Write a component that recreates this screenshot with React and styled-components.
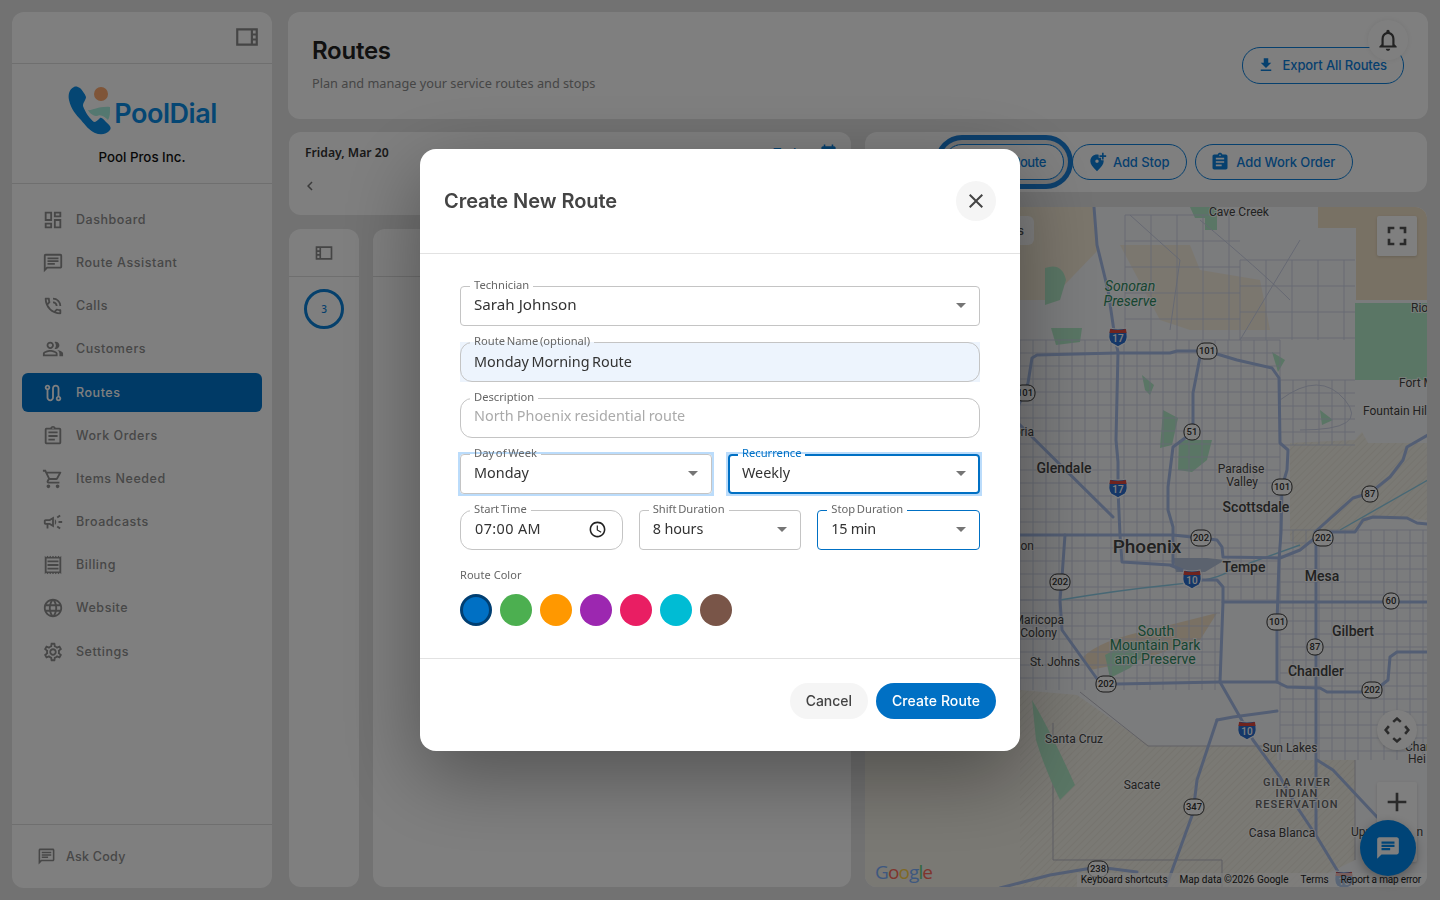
import React from 'react';
import styled, { createGlobalStyle } from 'styled-components';
import {
  MdOutlineDashboard, MdOutlineChat, MdOutlinePhoneInTalk, MdOutlinePeopleAlt, MdOutlineRoute,
  MdOutlineAssignment, MdOutlineShoppingCart, MdOutlineCampaign, MdOutlineReceipt, MdOutlineLanguage,
  MdOutlineSettings, MdOutlineViewSidebar, MdFileDownload, MdNotificationsNone, MdAddLocationAlt,
  MdAssignment, MdClose, MdArrowDropDown, MdAccessTime, MdChevronLeft, MdChat, MdCalendarMonth, MdFullscreen, MdAdd, MdRemove,
} from 'react-icons/md';

const UI = '"Inter", "Liberation Sans", sans-serif';
const BODY = '"Noto Sans", "Open Sans", sans-serif';
const BLUE = '#0070c4';
const LINE_BLUE = '#0d80dc';
const LOGO_BLUE = '#0a8ce6';

const Global = createGlobalStyle`
  html, body { margin: 0; padding: 0; height: 100%; background: #e4e4e4; overflow: hidden; }
  * { box-sizing: border-box; }
  #root { height: 100%; }
`;

const Page = styled.div`
  width: 1440px; height: 900px; padding: 12px; display: flex; gap: 16px; font-family: ${UI};
`;
const Sidebar = styled.aside`
  width: 260px; height: 876px; background: #fff; border-radius: 12px; display: flex; flex-direction: column;
`;
const SideTop = styled.div`
  height: 52px; border-bottom: 1px solid #dedede; display: flex; align-items: center; justify-content: flex-end;
  padding-right: 12px; color: #8a8a8a; font-size: 26px; padding-bottom: 2px;
`;
const Brand = styled.div`
  height: 120px; border-bottom: 1px solid #dedede; display: flex; flex-direction: column; align-items: center; padding-top: 21px;
`;
const LogoRow = styled.div`display: flex; align-items: flex-end; height: 50px;`;
const LogoWord = styled.span`
  font: 600 27px/27px ${UI}; color: ${LOGO_BLUE}; letter-spacing: -0.45px; margin-left: -1px; margin-bottom: 8px;
`;
const Company = styled.div`font: 500 13.3px/18px ${UI}; color: #111; margin-top: 13px;`;
const Nav = styled.nav`
  flex: 1; padding: 16.3px 10px 0; display: flex; flex-direction: column; gap: 4.2px;
`;
const NavItem = styled.div`
  height: 39px; border-radius: 6px; display: flex; align-items: center; gap: 12px; padding-left: 20px;
  background: ${p => (p.$active ? '#0074cc' : 'transparent')};
  color: ${p => (p.$active ? '#fff' : '#8e8e8e')};
  font: 500 12.5px/16px ${UI}; letter-spacing: 0.55px;
  svg { font-size: 22px; flex: none; }
`;
const SideFoot = styled.div`
  height: 64px; border-top: 1px solid #dedede; display: flex; align-items: center; gap: 10px; padding-left: 25px;
  color: #8e8e8e; font: 500 12.5px/16px ${UI}; letter-spacing: 0.25px; svg { font-size: 19px; }
`;

const Main = styled.main`flex: 1; display: flex; flex-direction: column; gap: 13px; min-width: 0; padding-bottom: 1px;`;
const Header = styled.header`
  position: relative; height: 107px; background: #fff; border-radius: 12px; padding: 24px; display: flex; justify-content: space-between;
`;
const PageTitle = styled.h1`margin: 0; font: 600 24px/30px ${UI}; color: #222; letter-spacing: -0.25px;`;
const PageSub = styled.p`margin: 8px 0 0; font: 400 12.72px/18px ${BODY}; color: #8c8c8c;`;
const Outline = styled.button`
  height: 36px; padding: 0 17px 0 14px; border-radius: 18px; border: 1px solid ${LINE_BLUE}; background: transparent; color: ${LINE_BLUE};
  font: 500 13px/16px ${UI}; letter-spacing: ${p => (p.$focus ? -0.4 : -0.1)}px; display: inline-flex; align-items: center; gap: 6px; flex: none; white-space: nowrap;
  svg { font-size: 20px; }
  ${p => p.$focus && `box-shadow: 0 0 0 4px #e6e6e6, 0 0 0 9px #1a7fd8;`}
`;
const ExportBtn = styled(Outline)`
  height: 37px; margin-top: 11px; padding: 0 16px 2px 14px; gap: 8px; svg { font-size: 18px; }
`;
const Bell = styled.div`
  position: absolute; left: 1080px; top: 8px; width: 40px; height: 40px; border-radius: 50%; background: #fff; color: #444;
  display: flex; align-items: center; justify-content: center; font-size: 26px; box-shadow: 0 0 6px rgba(0,0,0,.08);
`;
const Columns = styled.div`flex: 1; display: flex; gap: 14px; padding: 0 1px; min-height: 0;`;
const LeftCol = styled.div`width: 562px; display: flex; flex-direction: column; gap: 14px;`;
const RightCol = styled.div`flex: 1; display: flex; flex-direction: column; gap: 15px; min-width: 0;`;
const DateCard = styled.div`
  height: 83px; background: #fff; border-radius: 12px; padding: 11px 16px; color: #333;
`;
const DateRow = styled.div`display: flex; justify-content: space-between; align-items: center;`;
const DateText = styled.div`font: 600 12.2px/18px ${BODY}; color: #333;`;
const TodayLink = styled.div`
  color: ${LINE_BLUE}; font: 500 13px/18px ${UI}; display: flex; align-items: center; gap: 8px; margin-right: -3px;
  svg { font-size: 19px; }
`;
const Chevron = styled.div`font-size: 18px; color: #777; margin: 15px 0 0 -4px; display: flex;`;
const Panels = styled.div`flex: 1; display: flex; gap: 14px; min-height: 0;`;
const Panel = styled.section`
  width: ${p => (p.$w ? `${p.$w}px` : 'auto')}; flex: ${p => (p.$w ? 'none' : 1)}; background: #fff; border-radius: 12px;
  display: flex; flex-direction: column; align-items: center;
`;
const PanelHead = styled.div`
  height: 48px; width: 100%; border-bottom: 1px solid #dedede; display: flex; align-items: center; justify-content: center;
  color: #8a8a8a; font-size: 20px; svg { transform: scaleX(-1); }
`;
const Stop = styled.div`
  width: 40px; height: 40px; margin-top: 12px; border-radius: 50%; border: 3px solid #0a80d8; color: #0a80d8;
  display: flex; align-items: center; justify-content: center; font: 500 10px/12px ${BODY};
`;
const Toolbar = styled.div`
  height: 60px; background: #fff; border-radius: 12px; display: flex; align-items: center; gap: 8px; padding-left: 79px;
`;
const MapCard = styled.div`
  position: relative; flex: 1; background: #f7f8fa; border-radius: 12px; overflow: hidden;
`;
const MapSvg = styled.svg`display: block; width: 100%; height: 100%;`;
const MapBtn = styled.div`
  position: absolute; width: 40px; height: ${p => p.$h || 40}px; left: 512px; top: ${p => p.$top}px; background: #fff;
  border-radius: ${p => (p.$round ? '50%' : '2px')}; display: flex; flex-direction: column; align-items: center; justify-content: center; gap: 8px;
  color: #555; font-size: 32px; box-shadow: 0 1px 3px rgba(0,0,0,.15);
`;
const MapChip = styled.div`
  position: absolute; left: 60px; top: 9px; width: 109px; height: 29px; background: #fff; border-radius: 6px;
  font: 500 12px/29px ${UI}; color: #555; text-align: right; padding-right: 10px;
`;
const Attribution = styled.div`
  position: absolute; right: 0; bottom: 0; height: 14px; padding: 0 6px 0 4px; display: flex; gap: 12px; background: rgba(255,255,255,.65);
  font: 400 10px/13px "Roboto", sans-serif; color: #222; white-space: nowrap;
`;
const ReportLink = styled.span`letter-spacing: -0.17px;`;
const Fab = styled.div`
  position: absolute; left: 1360px; top: 820px; width: 56px; height: 56px; border-radius: 50%; background: #0088ee; color: #fff;
  display: flex; align-items: center; justify-content: center; font-size: 26px; box-shadow: 0 4px 12px rgba(0,0,0,.3);
`;

const Overlay = styled.div`
  position: fixed; inset: 0; background: rgba(0,0,0,.5); display: flex; align-items: center; justify-content: center;
`;
const Dialog = styled.div`
  width: 600px; background: #fff; border-radius: 16px; box-shadow: 0 24px 80px rgba(0,0,0,.36);
`;
const DialogHead = styled.div`
  padding: 32px 24px; border-bottom: 1px solid #e2e2e2; display: flex; align-items: center; justify-content: space-between;
`;
const DialogTitle = styled.h2`margin: 0; font: 600 20px/40px ${UI}; color: #444; letter-spacing: -0.05px;`;
const CloseBtn = styled.button`
  width: 40px; height: 40px; border-radius: 50%; border: 0; background: #f5f5f5; color: #444; font-size: 24px;
  display: flex; align-items: center; justify-content: center; padding: 0;
`;
const DialogBody = styled.div`padding: 26px 40px 32px; display: flex; flex-direction: column; gap: 10px;`;
const Row = styled.div`display: grid; grid-template-columns: repeat(${p => p.$n}, 1fr); gap: 16px;`;
const FieldWrap = styled.div`
  min-width: 0;
  ${p => p.$fill && `background: linear-gradient(#edf4fd, #edf4fd) no-repeat 0 6px / 100% 40px;`}
  ${p => p.$ring && `
    margin: 0 -2px -2px; padding: 0 2px 2px;
    background: linear-gradient(#bbdcfb, #bbdcfb) no-repeat 0 4px / 100% 44px;
  `}
`;
const Field = styled.fieldset`
  margin: 0; min-width: 0; height: 46px; padding: 0 13px ${p => (p.$input ? 6 : 8)}px;
  display: flex; align-items: center; justify-content: space-between;
  border: ${p => (p.$thick ? 2 : 1)}px solid ${p => (p.$blue ? BLUE : '#c4c4c4')};
  border-radius: ${p => (p.$round ? 12 : 4)}px;
  ${p => p.$thick && 'padding-left: 12px; padding-right: 12px;'}
  ${p => p.$white && 'background: #fff;'}
`;
const Legend = styled.legend`
  font: 400 11.2px/10px ${BODY}; height: 13px; padding: 0 4px; margin-left: -4px; white-space: nowrap; word-spacing: -1.2px;
  color: ${p => (p.$blue ? BLUE : '#666')};
`;
const Value = styled.span`
  font: 400 ${p => p.$size || 14.4}px/22px ${BODY}; color: ${p => p.$color || '#333'}; white-space: nowrap;
  letter-spacing: ${p => p.$ls || 0}px; word-spacing: ${p => p.$ws || 0}px;
  margin-left: ${p => p.$ml || 0}px; margin-top: ${p => p.$mt || 0}px;
`;
const Caret = styled.span`display: flex; font-size: 24px; color: #757575; margin-right: -7px;`;
const ClockIcon = styled.span`display: flex; font-size: 19px; color: #222; margin-right: 2px;`;
const ColorLabel = styled.div`font: 400 11px/14px ${BODY}; color: #666; margin-top: 8px; letter-spacing: 0.05px;`;
const Swatches = styled.div`display: flex; gap: 8px; margin-top: 2px;`;
const Swatch = styled.div`
  width: 32px; height: 32px; border-radius: 50%; background: ${p => p.$c}; border: ${p => (p.$sel ? '3px solid #003f72' : '0')};
`;
const DialogFoot = styled.div`
  border-top: 1px solid #e2e2e2; padding: 24px; display: flex; justify-content: flex-end; gap: 8px; padding-bottom: 32px;
`;
const Pill = styled.button`
  height: 36px; border: 0; border-radius: 18px; padding: 0 16px; font: 500 14px/18px ${UI};
  letter-spacing: ${p => (p.$primary ? 0.1 : -0.05)}px;
  background: ${p => (p.$primary ? BLUE : '#f5f5f5')}; color: ${p => (p.$primary ? '#fff' : '#444')};
`;

const MapText = styled.text`
  font-family: "Roboto", sans-serif; font-size: ${p => p.$s || 12}px; font-weight: ${p => p.$w || 400};
  fill: ${p => p.$c || '#444'}; text-anchor: ${p => p.$a || 'middle'}; font-style: ${p => (p.$i ? 'italic' : 'normal')};
  letter-spacing: ${p => p.$ls || 0}px; paint-order: stroke; stroke: rgba(255,255,255,.8); stroke-width: 2px;
`;
const ShieldText = styled.text`
  font-family: "Roboto", sans-serif; font-size: ${p => p.$s || 9.5}px; font-weight: 500; fill: ${p => p.$c || '#333'}; text-anchor: middle;
`;
const GoogleMark = styled.text`font-family: "Open Sans", sans-serif; font-size: 19px; font-weight: 500; letter-spacing: -0.9px;`;

const NAV = [
  ['Dashboard', MdOutlineDashboard], ['Route Assistant', MdOutlineChat], ['Calls', MdOutlinePhoneInTalk],
  ['Customers', MdOutlinePeopleAlt], ['Routes', MdOutlineRoute, true], ['Work Orders', MdOutlineAssignment],
  ['Items Needed', MdOutlineShoppingCart], ['Broadcasts', MdOutlineCampaign], ['Billing', MdOutlineReceipt],
  ['Website', MdOutlineLanguage], ['Settings', MdOutlineSettings],
];
const COLORS = ['#0070c4', '#4caf50', '#ff9800', '#9c27b0', '#e91e63', '#00bcd4', '#795548'];

const gridPath = (x0, x1, y0, y1, step) => {
  let d = '';
  for (let x = x0; x <= x1; x += step) d += `M${x} ${y0}V${y1}`;
  for (let y = y0; y <= y1; y += step) d += `M${x0} ${y}H${x1}`;
  return d;
};
const GRIDS = [
  gridPath(1020, 1280, 340, 600, 13),
  gridPath(1280, 1355, 380, 445, 13),
  gridPath(1280, 1427, 530, 760, 13),
  gridPath(1020, 1220, 600, 690, 13),
  gridPath(1125, 1240, 215, 340, 26),
  gridPath(1240, 1355, 260, 340, 26),
];
const HIGHWAYS = [
  'M1094 207L1097 245L1108 290L1115 338L1118 352L1116 440L1118 462L1118 490L1120 535',
  'M1016 412L1028 383L1032 358L1037 355L1117 353L1170 353L1177 351L1207 351L1237 360L1272 368L1279 378L1280 443L1288 450L1287 470L1282 487L1281 533L1279 560L1277 623L1277 682',
  'M1200 357L1193 393L1193 432L1173 447L1168 487L1168 510L1173 527L1173 565',
  'M1000 535L1117 535L1173 535L1201 538L1217 540L1222 547L1223 557L1280 558L1300 550L1315 538L1323 532L1355 532L1363 520L1373 517L1407 518L1417 523L1428 524',
  'M1120 535L1122 562L1170 565L1187 572L1192 580L1217 580L1223 587L1223 602L1220 682L1240 717L1253 740L1280 777L1297 807L1317 837L1337 870L1346 887',
  'M1315 532L1353 498L1370 493L1390 477L1403 460L1407 447L1428 435',
  'M1223 602H1428',
  'M1065 535L1062 577L1060 600L1062 630L1100 683L1117 684L1220 682L1277 682L1287 687L1320 688L1327 692L1373 692L1388 680L1390 657L1397 652L1428 652',
  'M1015 420L1113 517',
  'M1316 540V835',
  'M1317 760L1333 770L1377 817',
  'M1217 720L1197 780L1193 813L1166 887',
  'M1217 720L1233 717L1277 711',
  'M1000 888L1050 875L1098 867L1137 872',
];
const PARKS = [
  'M1355 303H1427V380H1355Z',
  'M1179 440L1212 440L1207 460L1192 472L1178 470Z',
  'M1163 410L1178 418L1172 445L1160 448Z',
  'M1051 328L1082 328L1080 342L1056 345Z',
  'M1190 207H1217V230H1205V218H1195Z',
  'M1045 268Q1062 262 1066 280L1060 300L1045 305Z',
  'M1105 655L1130 642L1160 640L1130 668L1110 678Z',
  'M1032 700Q1050 730 1075 785L1060 800Q1045 770 1036 740Z',
  'M1272 352L1285 360L1278 372Z',
  'M1320 410L1333 420L1322 425Z',
  'M1142 375L1154 385L1150 395L1145 390Z',
];
const LABELS = [
  ['Cave Creek', 1239, 216, { s: 12 }], ['Sonoran', 1130, 291, { s: 14, i: 1, c: '#2e8b62' }], ['Preserve', 1130, 306, { s: 14, i: 1, c: '#2e8b62' }],
  ['Rio', 1411, 312, { a: 'start' }], ['Fort M', 1399, 387, { a: 'start' }], ['Fountain Hil', 1363, 415, { a: 'start' }],
  ['Glendale', 1064, 473, { s: 14, w: 500 }], ['Paradise', 1241, 473], ['Valley', 1242, 486], ['Scottsdale', 1256, 512, { s: 14, w: 500 }],
  ['Phoenix', 1147, 553, { s: 19, w: 500 }], ['Tempe', 1244, 572, { s: 14, w: 500 }], ['Mesa', 1322, 581, { s: 14, w: 500 }],
  ['Gilbert', 1353, 636, { s: 14, w: 500 }], ['Chandler', 1316, 676, { s: 14, w: 500 }],
  ['South', 1156, 636, { s: 14, c: '#2e8b62' }], ['Mountain Park', 1155, 650, { s: 14, c: '#2e8b62' }], ['and Preserve', 1155, 664, { s: 14, c: '#2e8b62' }],
  ['Maricopa', 1064, 624, { a: 'end' }], ['Colony', 1057, 637, { a: 'end' }], ['St. Johns', 1055, 666], ['Santa Cruz', 1074, 743], ['Sacate', 1142, 789],
  ['Sun Lakes', 1290, 752], ['Casa Blanca', 1282, 837], ['Chan', 1405, 751, { a: 'start' }], ['Hei', 1408, 763, { a: 'start' }],
  ['Upper Santan', 1351, 836, { a: 'start' }], ['Peoria', 1034, 436, { a: 'end' }], ['Tolleson', 1034, 550, { a: 'end' }],
  ['GILA RIVER', 1297, 786, { s: 11, w: 500, ls: 1.1, c: '#666' }], ['INDIAN', 1297, 797, { s: 11, w: 500, ls: 1.1, c: '#666' }], ['RESERVATION', 1297, 808, { s: 11, w: 500, ls: 1.1, c: '#666' }],
];
const SHIELDS = [
  [1207, 351, '101'], [1025, 393, '101'], [1192, 432, '51'], [1282, 487, '101'], [1370, 494, '87'], [1201, 538, '202'], [1323, 538, '202'],
  [1060, 582, '202'], [1106, 684, '202'], [1372, 690, '202'], [1277, 622, '101'], [1315, 647, '87'], [1194, 807, '347'], [1098, 869, '238'], [1391, 601, '60'],
];
const INTERSTATES = [[1118, 337, '17'], [1118, 488, '17'], [1192, 579, '10'], [1247, 730, '10'], [1344, 880, '10']];

function Shield({ x, y, t }) {
  const w = t.length > 2 ? 20 : 16;
  return (
    <g>
      <rect x={x - w / 2} y={y - 8} width={w} height={16} rx={7} fill="#fff" stroke="#333" strokeWidth="1" />
      <ShieldText x={x} y={y + 3.3}>{t}</ShieldText>
    </g>
  );
}
function Interstate({ x, y, t }) {
  return (
    <g>
      <path d={`M${x - 8} ${y - 9}Q${x} ${y - 7} ${x + 8} ${y - 9}Q${x + 11} ${y + 2} ${x + 7} ${y + 6}Q${x + 3} ${y + 8} ${x} ${y + 10}Q${x - 3} ${y + 8} ${x - 7} ${y + 6}Q${x - 11} ${y + 2} ${x - 8} ${y - 9}Z`} fill="#2a6fd0" stroke="#fff" strokeWidth="1.2" />
      <path d={`M${x - 8} ${y - 8}Q${x} ${y - 6} ${x + 8} ${y - 8}L${x + 8.5} ${y - 4}H${x - 8.5}Z`} fill="#e0483c" />
      <ShieldText x={x} y={y + 5} $s={10} $c="#fff">{t}</ShieldText>
    </g>
  );
}

function PhoenixMap() {
  return (
    <MapSvg viewBox="865 207 562 680" preserveAspectRatio="none">
      <defs>
        <pattern id="hatch" width="5" height="5" patternUnits="userSpaceOnUse" patternTransform="rotate(45)">
          <rect width="5" height="5" fill="#f5f2e8" />
          <line x1="0" y1="0" x2="0" y2="5" stroke="#e4e0d4" strokeWidth="1" />
        </pattern>
      </defs>
      <rect x="865" y="207" width="563" height="680" fill="#f7f8fa" />
      <path d="M865 700H1054V887H865Z" fill="#f5f2e8" />
      <path d="M1020 207H1094L1098 250L1050 300H1020Z" fill="#f6ecd8" />
      <path d="M1120 245H1190L1200 270L1260 280L1270 330H1190L1160 320Z" fill="#f6ecd8" opacity=".8" />
      <path d="M1318 207H1428V300H1356V228H1318Z" fill="#f1e2c8" />
      <path d="M1083 657Q1100 640 1150 630L1217 613L1200 640L1140 660L1090 670Z" fill="#f4e2c8" />
      <path d="M1290 443L1355 440L1362 432L1368 443H1428V520L1373 517L1355 530L1320 532L1300 548L1290 540Z" fill="url(#hatch)" />
      <path d="M1020 690L1077 695L1150 746H1277V760H1355V860L1300 887H1020Z" fill="url(#hatch)" />
      <path d="M1053 723V860H1222V887" fill="none" stroke="#b9b9c4" strokeWidth="1" />
      <path d="M1080 692L1148 746H1277M1355 760V860" fill="none" stroke="#c2c2cc" strokeWidth="1" />
      {PARKS.map((d, i) => <path key={i} d={d} fill="#b4ecca" />)}
      {GRIDS.map((d, i) => <path key={i} d={d} fill="none" stroke="#ccd2e6" strokeWidth=".9" />)}
      <path d="M1280 400Q1320 370 1345 400T1300 430M1130 215L1180 260L1170 330M1300 240L1240 340M1200 220Q1260 270 1290 300" fill="none" stroke="#ccd2e6" strokeWidth="1" />
      <path d="M1060 600Q1120 590 1170 585T1230 570L1300 545M1340 530L1428 480" fill="none" stroke="#8fd0ea" strokeWidth="1.4" />
      <path d="M1173 558H1207L1225 560L1205 572H1176Z" fill="#b7c4dc" />
      {HIGHWAYS.map((d, i) => <path key={i} d={d} fill="none" stroke="#a6bce8" strokeWidth="3" strokeLinejoin="round" strokeLinecap="round" />)}
      {LABELS.map(([t, x, y, o = {}]) => (
        <MapText key={t} x={x} y={y} $s={o.s} $w={o.w} $c={o.c} $a={o.a} $i={o.i} $ls={o.ls}>{t}</MapText>
      ))}
      {SHIELDS.map(([x, y, t]) => <Shield key={`${x}${y}`} x={x} y={y} t={t} />)}
      {INTERSTATES.map(([x, y, t]) => <Interstate key={`${x}${y}`} x={x} y={y} t={t} />)}
      <GoogleMark x="875" y="879">
        <tspan fill="#7cb0ff">G</tspan><tspan fill="#ff6a5a">o</tspan><tspan fill="#ffd24a">o</tspan><tspan fill="#7cb0ff">g</tspan><tspan fill="#5fd080">l</tspan><tspan fill="#ff6a5a">e</tspan>
      </GoogleMark>
    </MapSvg>
  );
}

function Logo() {
  return (
    <svg width="48" height="50" viewBox="0 0 48 50">
      <path d="M7 2C2 4 1 10 2 15C4 24 9 30 14 35C18 40 23 46 28 48C33 50 39 50 43 45C45 42 42 40 39 37C37 35 35 32 33 33C31 35 29 37 27 37C23 34 18 27 16 21C16 17 19 15 19 12C18 9 15 5 13 3C11 2 9 1 7 2Z" fill={LOGO_BLUE} />
      <circle cx="34" cy="9" r="7" fill="#ffaa70" />
      <path d="M21 25C25 26 31 21 43 22C43 28 43 32 41 35C38 32 34 29 30 31C27 31 23 29 21 25Z" fill="#a8f0e0" />
    </svg>
  );
}

function Select({ label, value, wrap = {}, valueProps = {}, labelBlue, ...rest }) {
  return (
    <FieldWrap {...wrap}>
      <Field {...rest}>
        <Legend $blue={labelBlue}>{label}</Legend>
        <Value {...valueProps}>{value}</Value>
        <Caret><MdArrowDropDown /></Caret>
      </Field>
    </FieldWrap>
  );
}

export default function App() {
  return (
    <>
      <Global />
      <Page>
        <Sidebar>
          <SideTop><MdOutlineViewSidebar /></SideTop>
          <Brand>
            <LogoRow><Logo /><LogoWord>PoolDial</LogoWord></LogoRow>
            <Company>Pool Pros Inc.</Company>
          </Brand>
          <Nav>
            {NAV.map(([t, I, a]) => (
              <NavItem key={t} $active={a}><I />{t}</NavItem>
            ))}
          </Nav>
          <SideFoot><MdOutlineChat />Ask Cody</SideFoot>
        </Sidebar>
        <Main>
          <Header>
            <div>
              <PageTitle>Routes</PageTitle>
              <PageSub>Plan and manage your service routes and stops</PageSub>
            </div>
            <ExportBtn><MdFileDownload />Export All Routes</ExportBtn>
            <Bell><MdNotificationsNone /></Bell>
          </Header>
          <Columns>
            <LeftCol>
              <DateCard>
                <DateRow>
                  <DateText>Friday, Mar 20</DateText>
                  <TodayLink>Today<MdCalendarMonth /></TodayLink>
                </DateRow>
                <Chevron><MdChevronLeft /></Chevron>
              </DateCard>
              <Panels>
                <Panel $w={70}>
                  <PanelHead><MdOutlineViewSidebar /></PanelHead>
                  <Stop>3</Stop>
                </Panel>
                <Panel><PanelHead /></Panel>
              </Panels>
            </LeftCol>
            <RightCol>
              <Toolbar>
                <Outline $focus><MdAddLocationAlt />Add Route</Outline>
                <Outline><MdAddLocationAlt />Add Stop</Outline>
                <Outline><MdAssignment />Add Work Order</Outline>
              </Toolbar>
              <MapCard>
                <PhoenixMap />
                <MapChip>Stops</MapChip>
                <MapBtn $top={9}><MdFullscreen /></MapBtn>
                <MapBtn $top={503} $round>
                  <svg width="26" height="26" viewBox="0 0 24 24" fill="none" stroke="#555" strokeWidth="2.4"><path d="M8.500 4.500L12 1.500l3.500 3M8.500 19.500l3.500 3 3.500-3M4.500 8.500L1.500 12l3 3.500M19.500 8.500l3 3.500-3 3.500" /></svg>
                </MapBtn>
                <MapBtn $top={575} $h={80}><MdAdd /><MdRemove /></MapBtn>
                <Attribution>
                  <span>Keyboard shortcuts</span><span>Map data ©2026 Google</span><span>Terms</span><ReportLink>Report a map error</ReportLink>
                </Attribution>
              </MapCard>
            </RightCol>
          </Columns>
        </Main>
      </Page>
      <Fab><MdChat /></Fab>
      <Overlay>
        <Dialog>
          <DialogHead>
            <DialogTitle>Create New Route</DialogTitle>
            <CloseBtn><MdClose /></CloseBtn>
          </DialogHead>
          <DialogBody>
            <Select label="Technician" value="Sarah Johnson" valueProps={{ $size: 15.2, $mt: -2 }} />
            <FieldWrap $fill>
              <Field $round $input>
                <Legend>Route Name (optional)</Legend>
                <Value $ws={-1.2} $mt={-1}>Monday Morning Route</Value>
              </Field>
            </FieldWrap>
            <Field $round $input>
              <Legend>Description</Legend>
              <Value $color="#aaa" $ws={-0.6}>North Phoenix residential route</Value>
            </Field>
            <Row $n={2}>
              <Select label="Day of Week" value="Monday" wrap={{ $ring: true }} $white />
              <Select label="Recurrence" value="Weekly" wrap={{ $ring: true }} $white $blue $thick labelBlue />
            </Row>
            <Row $n={3}>
              <Field $round>
                <Legend>Start Time</Legend>
                <Value $ls={0.4} $ml={1}>07:00 AM</Value>
                <ClockIcon><MdAccessTime /></ClockIcon>
              </Field>
              <Select label="Shift Duration" value="8 hours" valueProps={{ $ls: -0.1 }} />
              <Select label="Stop Duration" value="15 min" $blue valueProps={{ $ls: -0.3 }} />
            </Row>
            <ColorLabel>Route Color</ColorLabel>
            <Swatches>
              {COLORS.map((c, i) => <Swatch key={c} $c={c} $sel={i === 0} />)}
            </Swatches>
          </DialogBody>
          <DialogFoot>
            <Pill>Cancel</Pill>
            <Pill $primary>Create Route</Pill>
          </DialogFoot>
        </Dialog>
      </Overlay>
    </>
  );
}
